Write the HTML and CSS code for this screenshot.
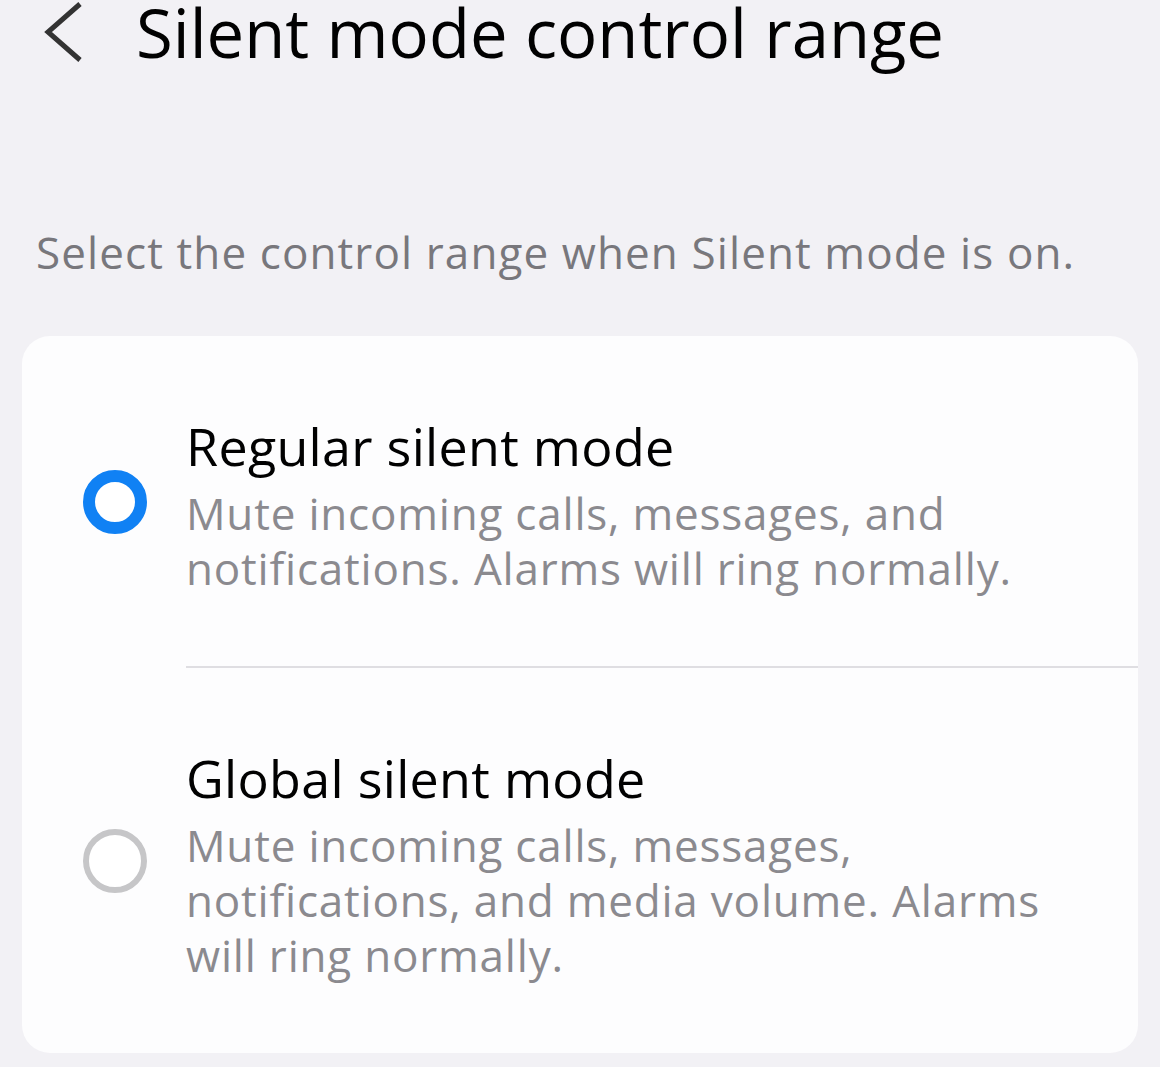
FILE: index.html
```html
<!doctype html>
<html>
    <head>
        <meta charset="utf-8">
        <meta name="viewport" content="width=device-width,initial-scale=1.0">
        <title>Silent mode control range</title>
        <link rel="stylesheet" href="styles.css">
    </head>
    <body>

        <header class="topbar">
            <svg class="back" viewBox="0 0 44 66" width="44" height="66">
                <path d="M38 5 L6 33 L38 61" fill="none" stroke="#333333" stroke-width="5" stroke-linejoin="miter"/>
            </svg>
            <h1 class="page-title">Silent mode control range</h1>
        </header>

        <p class="hint">Select the control range when Silent mode is on.</p>

        <section class="card">
            <div class="option">
                <span class="radio radio-on"></span>
                <div class="option-body">
                    <div class="option-title">Regular silent mode</div>
                    <div class="option-desc">Mute incoming calls, messages, and notifications. Alarms will ring normally.</div>
                </div>
            </div>
            <div class="option">
                <span class="radio"></span>
                <div class="option-body">
                    <div class="option-title">Global silent mode</div>
                    <div class="option-desc">Mute incoming calls, messages, notifications, and media volume. Alarms will ring normally.</div>
                </div>
            </div>
        </section>

    </body>
</html>
```

FILE: styles.css
```css
*{
    margin: 0px;
    padding: 0px;
    box-sizing: border-box;
}
html,body{
    height: 100%;
}
body{
    background-color: #f2f1f5;
    font-family: "Open Sans", "Noto Sans", sans-serif;
    color: #010101;
    overflow: hidden;
}

/* 顶部标题栏 */
.topbar{
    display: flex;
    align-items: center;
    height: 64px;
    padding-left: 42px;
}
.back{
    flex: none;
    display: block;
}
.page-title{
    margin-left: 50px;
    font-size: 67px;
    font-weight: 400;
    line-height: 64px;
    white-space: nowrap;
}

.hint{
    margin: 163px 0 59px 36px;
    font-size: 44px;
    line-height: 50px;
    letter-spacing: 1.1px;
    color: #78777c;
    white-space: nowrap;
}

/* 选项卡片 */
.card{
    margin: 0 22px;
    background-color: #fdfdfe;
    border-radius: 28px;
}
.option{
    display: flex;
    align-items: center;
}
.radio{
    flex: none;
    width: 64px;
    height: 64px;
    margin: 0 39px 0 61px;
    border-radius: 50%;
    border: 6px solid #c6c6c8;
    background-color: #fff;
}
.radio-on{
    border: 12px solid #1081f4;
}
.option-body{
    flex: 1;
    padding: 78px 53px 70px 0;
    border-bottom: 2px solid #dfdee2;
}
.option:last-child .option-body{
    padding-bottom: 70px;
    border-bottom: none;
}
.option-title{
    font-size: 52px;
    line-height: 64px;
    letter-spacing: 0.3px;
}
.option-desc{
    margin-top: 8px;
    font-size: 44px;
    line-height: 55px;
    letter-spacing: 0.8px;
    color: #8b8a8f;
}
```
